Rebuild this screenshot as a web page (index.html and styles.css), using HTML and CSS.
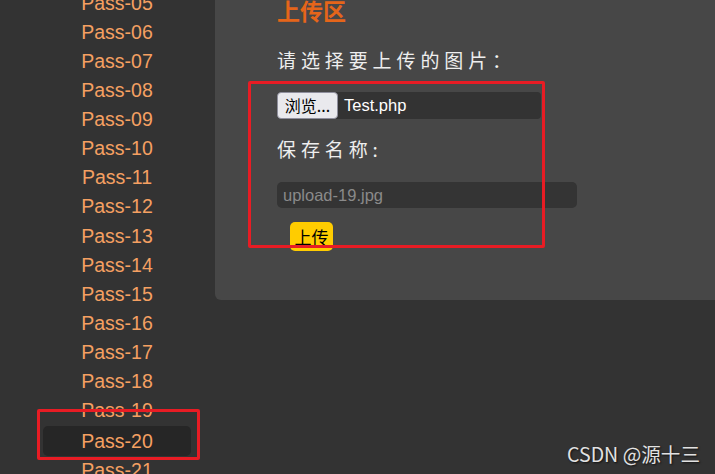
FILE: index.html
```html
<!DOCTYPE html>
<html lang="zh">
<head>
<meta charset="utf-8">
<title>Upload</title>
<link rel="stylesheet" href="styles.css">
</head>
<body>
<div class="page">
  <ul class="nav">
    <li>Pass-05</li>
    <li>Pass-06</li>
    <li>Pass-07</li>
    <li>Pass-08</li>
    <li>Pass-09</li>
    <li>Pass-10</li>
    <li>Pass-11</li>
    <li>Pass-12</li>
    <li>Pass-13</li>
    <li>Pass-14</li>
    <li>Pass-15</li>
    <li>Pass-16</li>
    <li>Pass-17</li>
    <li>Pass-18</li>
    <li>Pass-19</li>
    <li class="active">Pass-20</li>
    <li>Pass-21</li>
  </ul>
  <main class="panel">
    <h2 class="title">上传区</h2>
    <p class="label first">请选择要上传的图片：</p>
    <div class="file">
      <span class="browse">浏览...</span>
      <span class="fname">Test.php</span>
    </div>
    <p class="label second">保存名称:</p>
    <input class="name" type="text" value="upload-19.jpg">
    <button class="submit" type="button">上传</button>
  </main>
</div>
<div class="mark mark-form"></div>
<div class="mark mark-nav"></div>
<div class="watermark">CSDN @源十三</div>
</body>
</html>
```

FILE: styles.css
```css
html, body {
  margin: 0;
  padding: 0;
}
body {
  width: 715px;
  height: 474px;
  overflow: hidden;
  background: #333333;
  position: relative;
  font-family: "Liberation Sans", "Noto Sans CJK SC", sans-serif;
}
.page {
  display: flex;
  align-items: flex-start;
}
.nav {
  list-style: none;
  margin: -11.5px 0 0 0;
  padding: 0 24px 0 43px;
  width: 148px;
  flex: none;
}
.nav li {
  font-family: "Liberation Sans", Arial, sans-serif;
  font-size: 19.5px;
  line-height: 29.15px;
  height: 29.15px;
  color: #f5a062;
  text-align: center;
}
.nav li.active {
  background: #262626;
  border-radius: 5px;
  line-height: 30.5px;
  height: 30.5px;
}
.panel {
  flex: 1;
  margin: -20px -20px 0 0;
  height: 320px;
  box-sizing: border-box;
  padding: 19.2px 0 0 62px;
  background: #474747;
  border-radius: 0 0 0 6px;
}
.title {
  margin: 0;
  font-family: "Noto Sans CJK SC", sans-serif;
  font-weight: bold;
  font-size: 23px;
  line-height: 23px;
  color: #e5651a;
}
.label {
  margin: 0;
  font-family: "Noto Sans CJK SC", sans-serif;
  font-size: 19px;
  line-height: 19px;
  letter-spacing: 4.9px;
  color: #eeeeee;
}
.label.first {
  margin-top: 27.8px;
}
.label.second {
  margin-top: 20.5px;
}
.file {
  margin-top: 23px;
  display: flex;
  align-items: center;
  width: 264px;
  height: 27px;
  background: #333333;
  border-radius: 4px;
}
.browse {
  box-sizing: border-box;
  width: 61px;
  height: 27px;
  display: flex;
  align-items: center;
  justify-content: center;
  background: #e9e9ed;
  border: 1px solid #8f8f9d;
  border-radius: 4px;
  font-family: "Noto Sans CJK SC", sans-serif;
  font-size: 16px;
  color: #000;
}
.fname {
  padding-left: 6px;
  font-size: 16.5px;
  color: #ffffff;
}
.name {
  display: block;
  margin: 23.5px 0 0 0;
  box-sizing: border-box;
  width: 300px;
  height: 26.5px;
  padding: 0 0 0 6px;
  border: none;
  border-radius: 5px;
  background: #343434;
  color: #8a8a8a;
  font-family: "Liberation Sans", sans-serif;
  font-size: 16.5px;
  outline: none;
}
.submit {
  display: block;
  margin: 13.5px 0 0 13px;
  width: 43px;
  height: 29px;
  padding: 0;
  border: none;
  border-radius: 5px;
  background: #ffcc00;
  color: #000;
  font-family: "Noto Sans CJK SC", sans-serif;
  font-size: 17px;
}
.mark {
  position: absolute;
  box-sizing: border-box;
  border: 3.5px solid #e81c24;
  border-radius: 2px;
}
.mark-form {
  left: 248px;
  top: 81px;
  width: 297px;
  height: 167px;
}
.mark-nav {
  left: 37px;
  top: 409px;
  width: 163px;
  height: 51px;
}
.watermark {
  position: absolute;
  right: 15px;
  top: 440px;
  font-family: "Noto Sans CJK SC", sans-serif;
  font-size: 19.6px;
  line-height: 28px;
  color: #e2e2e2;
  text-shadow: 1px 1px 2px rgba(0, 0, 0, 0.7);
}
```
